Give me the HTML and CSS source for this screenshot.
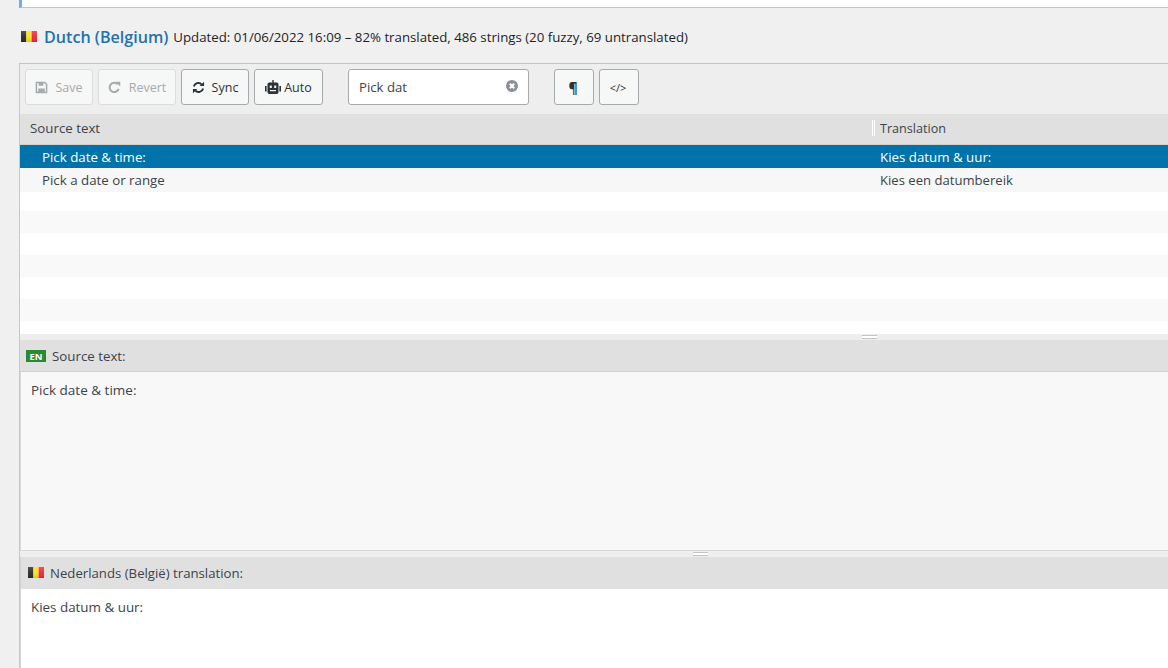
FILE: index.html
```html
<!DOCTYPE html>
<html lang="en">
<head>
<meta charset="utf-8">
<title>Loco Translate</title>
<link rel="stylesheet" href="styles.css">
</head>
<body>
<div class="notice"></div>
<h1 class="title">
  <svg class="flag" viewBox="0 0 16 11"><defs><linearGradient id="sheen" x1="0" y1="0" x2="0" y2="1"><stop offset="0" stop-color="#fff" stop-opacity=".18"/><stop offset=".5" stop-color="#fff" stop-opacity=".05"/><stop offset="1" stop-color="#000" stop-opacity=".12"/></linearGradient></defs><rect width="5.33" height="11" fill="#2a2a2a"/><rect x="5.33" width="5.33" height="11" fill="#f7e21c"/><rect x="10.66" width="5.34" height="11" fill="#ed2939"/><rect width="16" height="11" fill="url(#sheen)"/></svg>
  <a class="lang">Dutch (Belgium)</a>
  <span class="meta">Updated: 01/06/2022 16:09 – 82% translated, 486 strings (20 fuzzy, 69 untranslated)</span>
</h1>
<div class="editor">
  <div class="toolbar">
    <button class="btn off save"><svg class="ic" viewBox="0 0 14 14"><path fill="none" stroke="currentColor" stroke-width="1.6" d="M1.500 1.500h9l2 2v9h-11z"/><path fill="currentColor" d="M4 1.500h5v3.500H4zM3.500 8h7v4.500h-7z"/></svg>Save</button>
    <button class="btn off revert"><svg class="ic" viewBox="0 0 14 14"><path fill="none" stroke="currentColor" stroke-width="2.2" d="M11.500 8.500A5 5 0 1 1 10.300 3.400"/><path fill="currentColor" d="M8 .8h5.200V6z"/></svg>Revert</button>
    <button class="btn sync"><svg class="ic" viewBox="0 0 14 14"><path fill="none" stroke="currentColor" stroke-width="2" d="M2 6a5 5 0 0 1 8.600-2.200M12 8a5 5 0 0 1-8.600 2.200"/><path fill="currentColor" d="M13 .8v4.700H8.300zM1 13.200V8.500h4.700z"/></svg>Sync</button>
    <button class="btn auto"><svg class="ic bot" viewBox="0 0 16 14"><path fill="currentColor" fill-rule="evenodd" d="M7.300 0h1.400v2.500h3a1.800 1.800 0 0 1 1.800 1.800v7.900a1.800 1.800 0 0 1-1.800 1.800H4.300a1.800 1.800 0 0 1-1.800-1.800V4.300a1.800 1.800 0 0 1 1.800-1.800h3zM4.800 5.500v2.500h2V5.500zM9.200 5.500v2.500h2V5.500zM5 10v1.200h6V10z"/><path fill="currentColor" d="M0 6h1.600v5.500H0zM14.400 6H16v5.500h-1.600z"/></svg>Auto</button>
    <div class="search">
      <span class="query">Pick dat</span>
      <svg class="clear" viewBox="0 0 12 12"><circle cx="6" cy="6" r="6" fill="#8c8f94"/><path stroke="#fff" stroke-width="2" d="M3.800 3.800l4.400 4.400M8.200 3.800l-4.400 4.400"/></svg>
    </div>
    <button class="btn square pilcrow">¶</button>
    <button class="btn square code">&lt;/&gt;</button>
  </div>
  <div class="head">
    <div class="col-source">Source text</div>
    <div class="col-target">Translation</div>
  </div>
  <div class="rows">
    <div class="row selected"><div class="col-source">Pick date &amp; time:</div><div class="col-target">Kies datum &amp; uur:</div></div>
    <div class="row alt first"><div class="col-source">Pick a date or range</div><div class="col-target">Kies een datumbereik</div></div>
    <div class="row"></div>
    <div class="row alt"></div>
    <div class="row"></div>
    <div class="row alt"></div>
    <div class="row"></div>
    <div class="row alt"></div>
  </div>
  <div class="split"><span class="grip grip-a"></span></div>
  <div class="pane-head"><span class="badge">EN</span>Source text:</div>
  <div class="source-body">Pick date &amp; time:</div>
  <div class="split"><span class="grip grip-b"></span></div>
  <div class="pane-head target"><svg class="flag small" viewBox="0 0 16 11"><rect width="5.33" height="11" fill="#2a2a2a"/><rect x="5.33" width="5.33" height="11" fill="#f7e21c"/><rect x="10.66" width="5.34" height="11" fill="#ed2939"/><rect width="16" height="11" fill="url(#sheen)"/></svg>Nederlands (België) translation:</div>
  <div class="target-body">Kies datum &amp; uur:</div>
</div>
</body>
</html>
```
FILE: styles.css
```css
* { box-sizing: border-box; }
html, body { margin: 0; height: 668px; overflow: hidden; }
body {
  background: #f0f0f1;
  color: #3c434a;
  font-family: "Open Sans", "Noto Sans", sans-serif;
  font-size: 13.300px;
  padding-left: 19px;
}
.notice {
  height: 8px;
  background: #fff;
  border-left: 3px solid #72aee6;
  border-bottom: 1px solid #c3c4c7;
}
.title {
  margin: 0;
  height: 55px;
  display: flex;
  align-items: center;
  font-weight: 400;
  font-size: 16px;
  padding: 2px 0 0 2px;
}
.flag { width: 16px; height: 11px; margin-right: 7px; flex: none; }
.lang { color: #2271b1; font-size: 16.100px; font-weight: 600; margin-right: 5px; }
.meta { color: #1d2327; font-size: 13.250px; }
.editor {
  border-top: 1px solid #c3c4c7;
  border-left: 1px solid #c8c8c8;
  height: 605px;
  background: #eee;
}
.toolbar {
  height: 50px;
  display: flex;
  align-items: center;
  padding: 0 0 4px 5px;
}
.btn {
  height: 36px;
  display: flex;
  align-items: center;
  justify-content: center;
  padding: 0;
  margin-right: 5px;
  border: 1px solid #a7aaad;
  border-radius: 3px;
  background: #f6f7f7;
  color: #2c3338;
  font: inherit;
  font-size: 12.500px;
}
.btn.off { color: #a7aaad; border-color: #dcdcde; }
.save { width: 68px; }
.revert { width: 78px; }
.sync { width: 68px; }
.auto { width: 69px; margin-right: 25px; }
.ic { width: 13px; height: 13px; margin-right: 7px; flex: none; }
.revert .ic { margin-right: 8px; }
.bot { width: 16px; height: 14px; margin-right: 3px; }
.search {
  width: 181px;
  height: 36px;
  display: flex;
  align-items: center;
  justify-content: space-between;
  padding: 0 10px;
  margin-right: 25px;
  background: #fff;
  border: 1px solid #a7aaad;
  border-radius: 3px;
}
.query { font-size: 13.200px; }
.clear { width: 12px; height: 12px; margin-bottom: 2px; }
.square { width: 40px; }
.pilcrow { font-weight: 700; font-size: 14px; padding-right: 2px; }
.code { font-size: 11px; padding-right: 2px; }
.head {
  height: 31px;
  display: flex;
  align-items: center;
  padding-bottom: 2px;
  background: #e0e0e0;
  border-bottom: 1px solid #d0d0d0;
}
.head .col-source { width: 852px; padding: 0 0 1px 10px; }
.head .col-target {
  padding-left: 5px;
  height: 16px;
  line-height: 18px;
  font-size: 12.600px;
  border-left: 3px double #fff;
}
.rows { height: 189px; background: #fff; }
.row { display: flex; height: 22px; line-height: 22px; background: #fff; }
.row.alt { background: #f9f9f9; }
.row.alt.first { background: #f7f7f7; }
.row.first .col-target { font-size: 13.100px; }
.row:nth-child(1) { height: 23px; line-height: 24px; }
.row:nth-child(2) { height: 24px; line-height: 25px; }
.row:nth-child(3) { height: 19px; }
.row .col-source { width: 860px; padding-left: 22px; }
.row.selected { background: #0073aa; color: #fff; font-weight: 500; }
.split {
  height: 6px;
  display: flex;
  background: #eee;
}
.grip {
  width: 15px;
  height: 4px;
  border-top: 1px solid #c3c4c7;
  border-bottom: 1px solid #c3c4c7;
  background: #fff;
  margin-top: 1px;
}
.grip-a { margin-left: 842px; }
.grip-b { margin-left: 673px; }
.pane-head {
  height: 32px;
  display: flex;
  align-items: center;
  padding: 1px 0 0 6px;
  background: #e0e0e0;
  border-bottom: 1px solid #d0d0d0;
}
.pane-head.target { padding: 0 0 1px 7px; border-bottom: 0; border-left: 1px solid #d4d4d4; font-size: 13.200px; }
.badge {
  width: 20px;
  height: 12px;
  margin-right: 6px;
  display: flex;
  align-items: center;
  justify-content: center;
  background: #2b8a2f;
  color: #fff;
  font-size: 9.500px;
  font-weight: 700;
}
.small { margin-right: 6px; }
.source-body {
  height: 179px;
  padding: 9px 10px;
  background: #f8f8f8;
  font-size: 13.500px;
  line-height: 19px;
  border-left: 1px solid #d8d8d8;
  border-bottom: 1px solid #d8d8d8;
}
.target-body {
  height: 91px;
  padding: 9px 10px;
  background: #fff;
  font-size: 13.400px;
  line-height: 19px;
  border-left: 1px solid #d4d4d4;
}
```
